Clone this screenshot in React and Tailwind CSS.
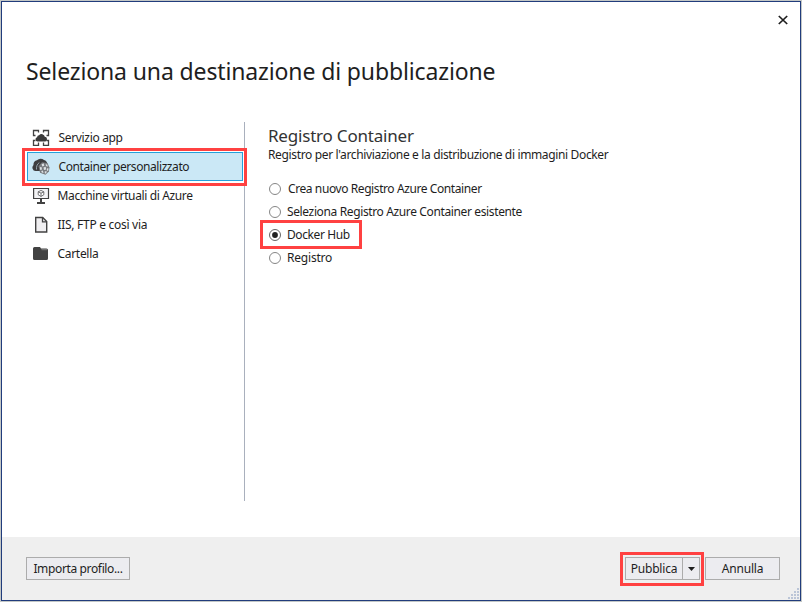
import React from "react";

function AppServiceIcon() {
  return (
    <svg width="18" height="18" viewBox="0 0 18 18" fill="none" stroke="#424242" className="mb-px shrink-0">
      <path d="M3.500 7.500h-2v-5h5v2M11.500 4.500v-2h5v5h-2M3.500 12.500h-2v5h5v-3M11.500 14.500v3h5v-5h-2" strokeWidth="1.300" />
      <path d="M5.500 13.500a2.200 2.200 0 0 1-.4-4.300 2 2 0 0 1 2-1.900 3.200 3.200 0 0 1 5.700 1.500 2.400 2.400 0 0 1 .5 4.700z" fill="#3a3a3a" stroke="none" />
    </svg>
  );
}

function ContainerIcon() {
  return (
    <svg width="18" height="18" viewBox="0 0 18 18" className="mb-px shrink-0">
      <path d="M3.500 14A3.500 3.500 0 0 1 1.500 8 4.500 4.500 0 0 1 5 3.200a5 5 0 0 1 7-.2 4.500 4.500 0 0 1 3.300 4L10 14z" fill="#3d3d3f" />
      <path d="m6.500 9 3.500-3.800L15.500 6l2 4.500-.6 4-3.400 3.200-5.500-1.900z" fill="#77797d" />
      <path d="m9.600 7.200 2-.9.7 2.400-2 .9zM13.700 6.900l1.700.9.3 2-1.700-.7zM7.800 10.200l1.700-.3.5 2.500-1.800.6zM11.500 10.500l2.200-.7.5 2.700-2.200.6zM15 11.200l1.600.3-.5 2.600-1.300-.6zM9.200 14l1.700-.4.6 2.400-1.700-.6zM12.600 14.500l2-.4-.2 1.900-1.400.7z" fill="#dde1e4" />
      <path d="M4.500 12.500C4.300 9.500 5 7.200 7.300 5.600" fill="none" stroke="#a9bbc4" strokeWidth=".8" />
    </svg>
  );
}

function MachineIcon() {
  return (
    <svg width="18" height="18" viewBox="0 0 18 18" className="mb-px shrink-0">
      <path d="M1.600 2.500h14.900v10H1.600z" fill="#f4f4f6" stroke="#424242" strokeWidth="1.200" />
      <path d="M8 12.500h2V16h3v2H5v-2h3z" fill="#424242" />
      <path d="m9 4.400 2.800 1.400v3L9 10.400 6.200 8.800v-3zM6.200 5.800 9 7.200l2.800-1.400M9 7.200v3.200" fill="#fff" stroke="#515153" strokeWidth=".8" />
    </svg>
  );
}

function FileIcon() {
  return (
    <svg width="18" height="18" viewBox="0 0 18 18" className="mb-px shrink-0">
      <path d="M3.700 2.500h7l4 4v10.500h-11z" fill="#f0eff1" stroke="#424242" strokeWidth="1.400" />
      <path d="M10.500 2.500v4.300h4.200" fill="none" stroke="#424242" strokeWidth="1.300" />
    </svg>
  );
}

function FolderIcon() {
  return (
    <svg width="18" height="18" viewBox="0 0 18 18" fill="#424242" className="mb-px shrink-0">
      <path d="M1 4.500Q1 3 2.500 3H8l1 1.500h5.500Q16 4.500 16 6v8.500q0 1.500-1.500 1.500h-12Q1 16 1 14.500z" />
      <path d="M9.500 5.700H15" stroke="#999" strokeWidth=".7" />
    </svg>
  );
}

const targets = [
  { label: "Servizio app", icon: AppServiceIcon, cls: "ml-[8.5px] tracking-[-0.33px]" },
  { label: "Container personalizzato", icon: ContainerIcon, cls: "ml-[8.5px] tracking-[-0.42px]", selected: true },
  { label: "Macchine virtuali di Azure", icon: MachineIcon, cls: "ml-[7.5px] tracking-[-0.37px]" },
  { label: "IIS, FTP e così via", icon: FileIcon, cls: "ml-[7.5px] tracking-[-0.29px]" },
  { label: "Cartella", icon: FolderIcon, cls: "ml-[7.5px] tracking-[-0.3px]" },
];

const registries = [
  { label: "Crea nuovo Registro Azure Container", cls: "ml-[7px] tracking-[-0.41px]" },
  { label: "Seleziona Registro Azure Container esistente", cls: "ml-[6px] tracking-[-0.37px]" },
  { label: "Docker Hub", cls: "ml-[6px] tracking-[-0.4px]", selected: true },
  { label: "Registro", cls: "ml-[6px] tracking-[-0.2px]" },
];

function Radio({ checked }) {
  return (
    <svg width="12" height="12" viewBox="0 0 12 12" className="shrink-0">
      <circle cx="6" cy="6" r="5.500" fill="#fff" stroke={checked ? "#666" : "#858585"} />
      {checked && <circle cx="6" cy="6" r="2.900" fill="#212121" />}
    </svg>
  );
}

function Grip() {
  return (
    <svg width="12" height="12" viewBox="0 0 12 12" className="absolute right-0 bottom-0">
      {[[9, 0], [6, 3], [9, 3], [3, 6], [6, 6], [9, 6], [0, 9], [3, 9], [6, 9], [9, 9]].map(([x, y]) => (
        <rect key={x + "-" + y} x={x} y={y} width="2" height="2" fill="#bbc5d7" />
      ))}
    </svg>
  );
}

export default function App() {
  return (
    <div className="h-[602px] w-[802px] overflow-hidden bg-[#c3c7c6] p-px font-['Noto_Sans','Open_Sans',sans-serif] text-[12px] leading-4 text-[#1e1e1e]">
      <div className="relative flex h-[600px] w-[800px] flex-col border border-[#213c7c] bg-white">
        <header className="h-[120px] shrink-0">
          <div className="flex h-9 items-center justify-end pr-[12px]">
            <svg width="10" height="10" viewBox="0 0 10 10" aria-label="Chiudi">
              <path d="M.8 1l8.400 8M9.200 1 .8 9" stroke="#1e1e1e" strokeWidth="1.700" />
            </svg>
          </div>
          <h1 className="pt-[17px] pl-[24px] text-[23px] leading-8 tracking-[-0.13px] whitespace-nowrap">
            Seleziona una destinazione di pubblicazione
          </h1>
        </header>
        <main className="flex h-[415px] shrink-0">
          <nav className="h-[379px] w-[243px] shrink-0 border-r border-[#a9b0bd] pt-px pl-[25px]">
            {targets.map(({ label, icon: Icon, cls, selected }) => (
              <div
                key={label}
                className={
                  "relative flex h-[29px] w-[216px] items-center border pl-[4px] whitespace-nowrap " +
                  (selected ? "border-[#26a0da] bg-[#cbe8f6]" : "border-transparent")
                }
              >
                <Icon />
                <span className={"pt-px " + cls}>{label}</span>
                {selected && <div className="absolute -top-[5px] -left-[6px] h-[38px] w-[225px] border-3 border-[#ff4141]" />}
              </div>
            ))}
          </nav>
          <section className="pl-[23px] whitespace-nowrap">
            <h2 className="pt-[2px] text-[17px] leading-6 tracking-[-0.2px] text-[#333]">Registro Container</h2>
            <p className="-mt-px tracking-[-0.355px]">Registro per l'archiviazione e la distribuzione di immagini Docker</p>
            <div className="mt-[14px]">
              {registries.map(({ label, cls, selected }) => (
                <div key={label} className="relative flex h-[23px] items-center pl-px">
                  <Radio checked={selected} />
                  <span className={"pt-px " + cls}>{label}</span>
                  {selected && <div className="absolute -top-[3px] -left-[8px] h-[29px] w-[102px] border-3 border-[#ff4141]" />}
                </div>
              ))}
            </div>
          </section>
        </main>
        <footer className="relative flex h-[63px] shrink-0 items-start bg-[#efefef] pt-[20px] pr-[20px] pl-[24px]">
          <button className="h-[23px] w-[104px] border border-[#acacac] bg-[#ececf0] pt-px tracking-[-0.36px] whitespace-nowrap">
            Importa profilo...
          </button>
          <div className="relative ml-auto flex h-[23px] w-[75px] border border-[#acacac] bg-[#ececf0]">
            <button className="w-[57px] border-r border-[#acacac] pt-px tracking-[-0.2px] whitespace-nowrap">Pubblica</button>
            <button className="flex flex-1 items-center justify-center" aria-label="Altre opzioni">
              <svg width="7" height="4" viewBox="0 0 7 4"><path d="M0 0h7L3.500 4z" fill="#1e1e1e" /></svg>
            </button>
            <div className="pointer-events-none absolute -top-[6px] -left-[6px] h-[34px] w-[84px] border-3 border-[#ff4141]" />
          </div>
          <button className="ml-[5px] h-[23px] w-[75px] border border-[#acacac] bg-[#ececf0] pt-px tracking-[-0.2px]">Annulla</button>
          <Grip />
        </footer>
      </div>
    </div>
  );
}
